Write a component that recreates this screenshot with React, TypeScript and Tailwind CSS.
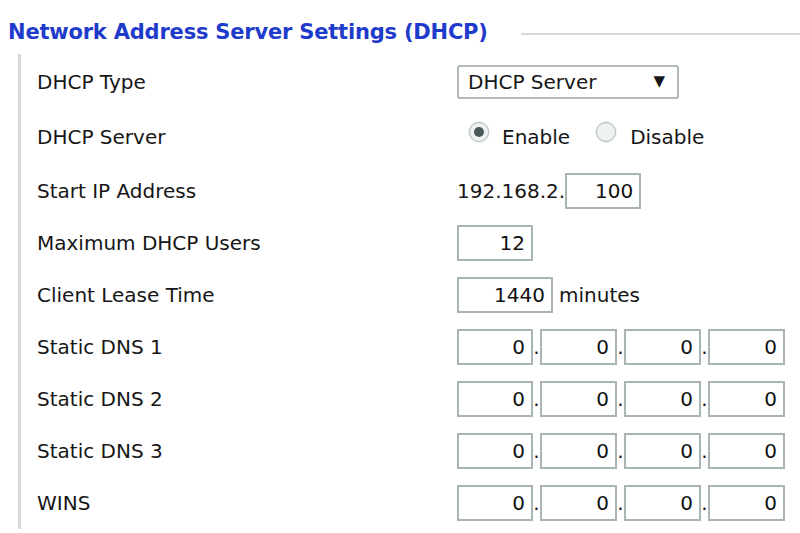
const dns = ["Static DNS 1", "Static DNS 2", "Static DNS 3", "WINS"];

function Box({ value, w }: { value: string; w: string }) {
  return (
    <div
      className={`${w} h-[36px] border-2 border-[#a9b5b5] bg-white flex items-center justify-end pr-[6px] text-[#111]`}
    >
      {value}
    </div>
  );
}

function Row({ label, children }: { label: string; children: React.ReactNode }) {
  return (
    <div className="flex items-center h-[52px]">
      <div className="w-[420px] shrink-0">{label}</div>
      <div className="flex items-center">{children}</div>
    </div>
  );
}

function Radio({ checked }: { checked?: boolean }) {
  return (
    <span className="w-[20px] h-[20px] rounded-full border border-[#b4bcbc] bg-[#eef1f1] shadow-[0_0_2px_#c8d0d0] flex items-center justify-center -mt-[9px]">
      {checked && <span className="w-[10px] h-[10px] rounded-full bg-[#4c5858]" />}
    </span>
  );
}

export default function App() {
  return (
    <div
      className="w-[800px] h-[533px] bg-white overflow-hidden text-[20px] text-[#161616]"
      style={{ fontFamily: '"DejaVu Sans", Verdana, sans-serif' }}
    >
      <div className="flex items-center pt-[17px] pl-[8px]">
        <h1 className="text-[21px] font-bold text-[#1f3bcc] whitespace-nowrap tracking-[-0.2px]">
          Network Address Server Settings (DHCP)
        </h1>
        <div className="flex-1 h-[2px] bg-[#d4d9d9] ml-[33px] mt-[2px]" />
      </div>

      <div className="ml-[18px] mt-[5px] border-l-[3px] border-[#d4d9d9] pl-[16px] pt-[2px]">
        <Row label="DHCP Type">
          <div className="w-[222px] h-[34px] border-2 border-[#b2baba] rounded-[3px] flex items-center justify-between pl-[9px] pr-[12px]">
            <span>DHCP Server</span>
            <span className="text-[15px]">▼</span>
          </div>
        </Row>
        <div className="h-[3px]" />
        <Row label="DHCP Server">
          <div className="flex items-center pl-[12px]">
            <Radio checked />
            <span className="ml-[13px]">Enable</span>
            <span className="ml-[26px]" />
            <Radio />
            <span className="ml-[14px]">Disable</span>
          </div>
        </Row>
        <div className="h-[2px]" />
        <Row label="Start IP Address">
          <span>192.168.2.</span>
          <Box value="100" w="w-[76px]" />
        </Row>
        <Row label="Maximum DHCP Users">
          <Box value="12" w="w-[76px]" />
        </Row>
        <Row label="Client Lease Time">
          <Box value="1440" w="w-[96px]" />
          <span className="ml-[6px]">minutes</span>
        </Row>
        {dns.map((d) => (
          <Row key={d} label={d}>
            <Box value="0" w="w-[76px]" />
            <span className="w-[7px] text-center">.</span>
            <Box value="0" w="w-[77px]" />
            <span className="w-[7px] text-center">.</span>
            <Box value="0" w="w-[77px]" />
            <span className="w-[7px] text-center">.</span>
            <Box value="0" w="w-[77px]" />
          </Row>
        ))}
      </div>
    </div>
  );
}
